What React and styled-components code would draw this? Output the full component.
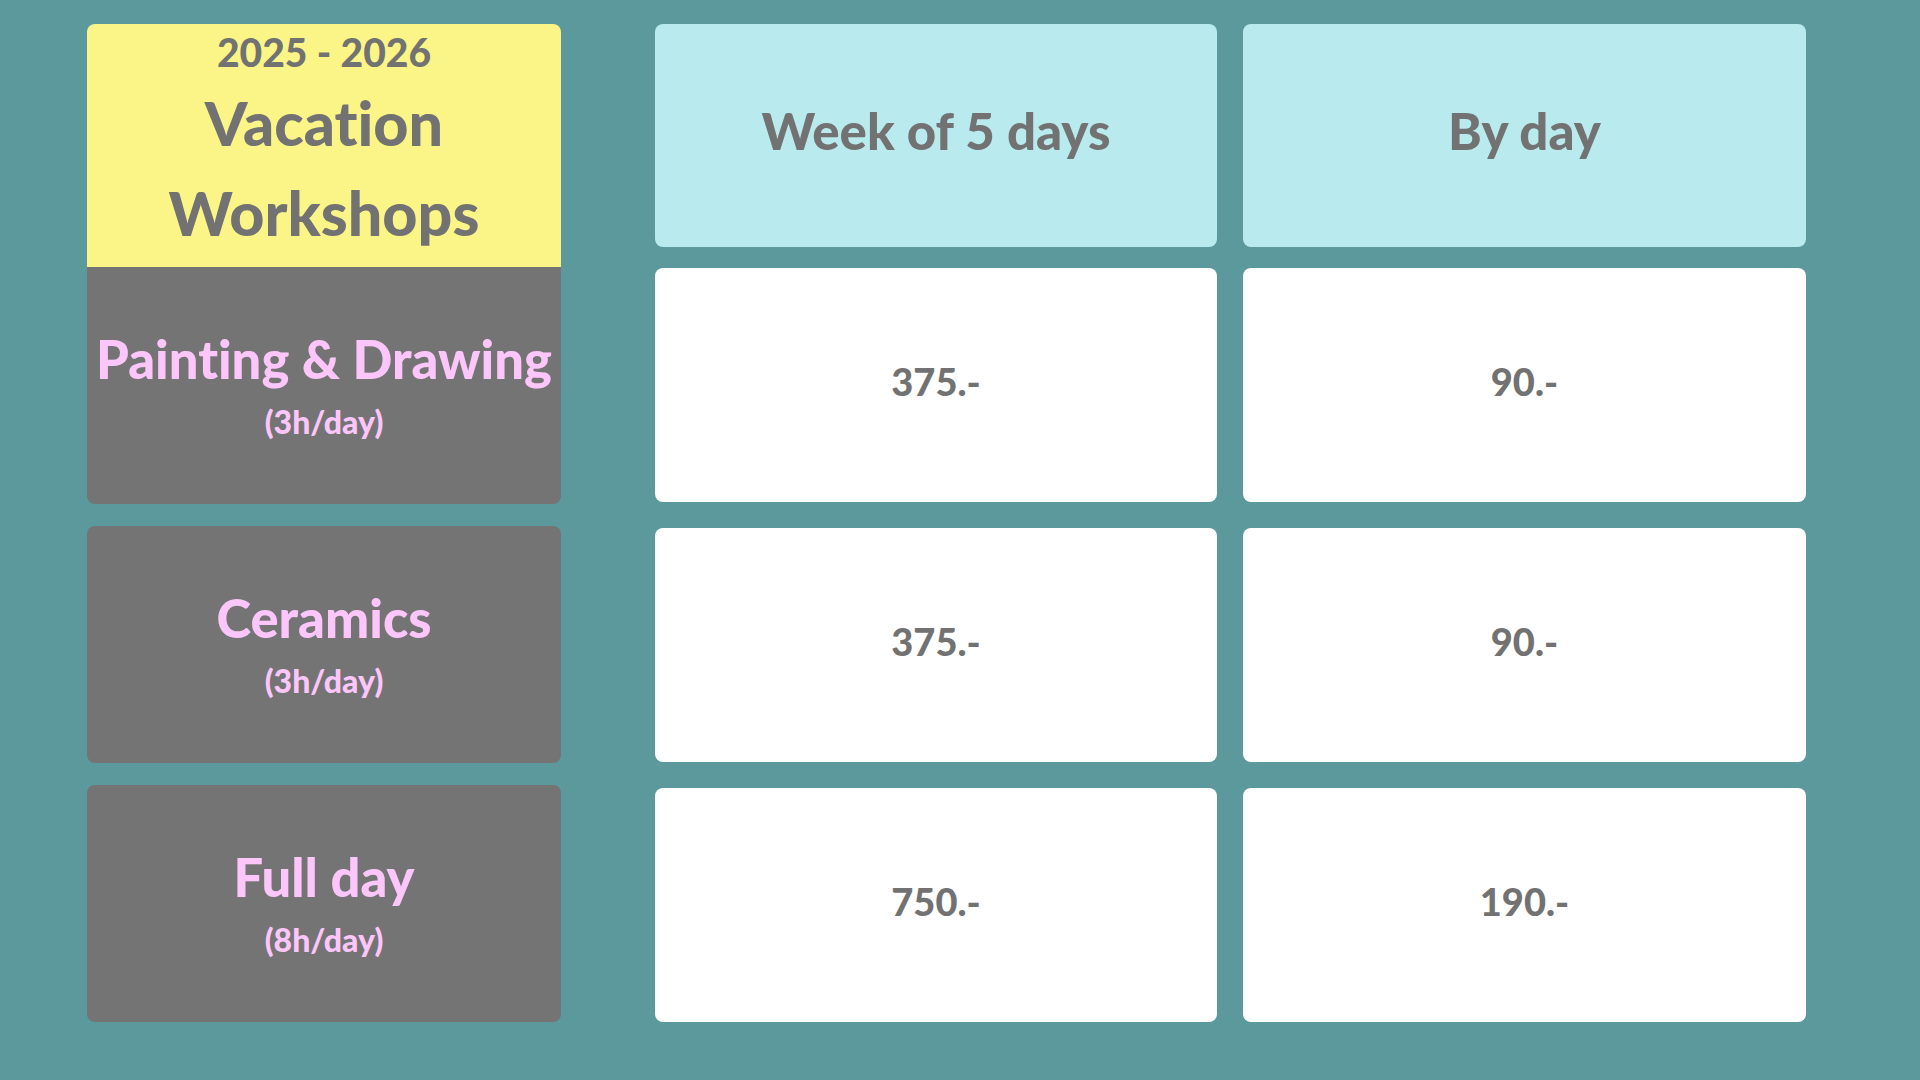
import React from 'react';
import styled, { createGlobalStyle } from 'styled-components';

const GlobalStyle = createGlobalStyle`
  html, body {
    margin: 0;
    padding: 0;
    background: #5b999c;
  }
  body {
    font-family: Lato, 'Open Sans', sans-serif;
    font-variant-ligatures: none;
  }
`;

const Page = styled.main`
  box-sizing: border-box;
  width: 1920px;
  height: 1080px;
  padding: 24px 0 0 87px;
  display: flex;
  align-items: flex-start;
  gap: 26px;
  background: #5b999c;
`;

const Sidebar = styled.section`
  width: 474px;
  margin-right: 68px;
  display: flex;
  flex-direction: column;
`;

const TitleCard = styled.header`
  height: 243px;
  box-sizing: border-box;
  padding-top: 6px;
  display: flex;
  flex-direction: column;
  align-items: center;
  background: #fbf587;
  border-radius: 8px 8px 0 0;
  color: #727272;
  font-weight: 900;
`;

const Years = styled.div`
  font-size: 39px;
  line-height: 44px;
  margin-bottom: 4px;
`;

const Title = styled.h1`
  margin: 0;
  font-size: 61px;
  line-height: 90px;
  font-weight: 900;
  text-align: center;
`;

const LabelList = styled.div`
  display: flex;
  flex-direction: column;
  gap: 22px;
`;

const LabelCard = styled.div`
  height: 237px;
  display: flex;
  flex-direction: column;
  align-items: center;
  justify-content: center;
  background: #747474;
  border-radius: ${({ $first }) => ($first ? '0 0 8px 8px' : '8px')};
  color: #fdc6fb;
  font-weight: 900;
`;

const LabelName = styled.div`
  font-size: 52.5px;
  line-height: 60px;
  white-space: nowrap;
`;

const LabelHours = styled.div`
  margin-top: 13px;
  font-size: 32px;
  line-height: 40px;
`;

const PriceColumn = styled.section`
  width: ${({ $width }) => $width}px;
  display: flex;
  flex-direction: column;
  gap: 21px;
`;

const ColumnHead = styled.div`
  height: 223px;
  box-sizing: border-box;
  padding-bottom: 10px;
  display: flex;
  align-items: center;
  justify-content: center;
  background: #b8eaee;
  border-radius: 8px;
  color: #727272;
  font-size: 51px;
  font-weight: 900;
`;

const PriceList = styled.div`
  display: flex;
  flex-direction: column;
  gap: 26px;
`;

const PriceCard = styled.div`
  height: 234px;
  box-sizing: border-box;
  padding-bottom: 8px;
  display: flex;
  align-items: center;
  justify-content: center;
  background: #ffffff;
  border-radius: 8px;
  color: #727272;
  font-size: 38px;
  font-weight: 900;
`;

const workshops = [
  { name: 'Painting & Drawing', hours: '(3h/day)', week: '375.-', day: '90.-' },
  { name: 'Ceramics', hours: '(3h/day)', week: '375.-', day: '90.-' },
  { name: 'Full day', hours: '(8h/day)', week: '750.-', day: '190.-' },
];

const columns = [
  { title: 'Week of 5 days', key: 'week', width: 562 },
  { title: 'By day', key: 'day', width: 563 },
];

export default function App() {
  return (
    <>
      <GlobalStyle />
      <Page>
        <Sidebar>
          <TitleCard>
            <Years>2025 - 2026</Years>
            <Title>
              Vacation
              <br />
              Workshops
            </Title>
          </TitleCard>
          <LabelList>
            {workshops.map((w, i) => (
              <LabelCard key={w.name} $first={i === 0}>
                <LabelName>{w.name}</LabelName>
                <LabelHours>{w.hours}</LabelHours>
              </LabelCard>
            ))}
          </LabelList>
        </Sidebar>
        {columns.map((col) => (
          <PriceColumn key={col.key} $width={col.width}>
            <ColumnHead>{col.title}</ColumnHead>
            <PriceList>
              {workshops.map((w) => (
                <PriceCard key={w.name}>{w[col.key]}</PriceCard>
              ))}
            </PriceList>
          </PriceColumn>
        ))}
      </Page>
    </>
  );
}
